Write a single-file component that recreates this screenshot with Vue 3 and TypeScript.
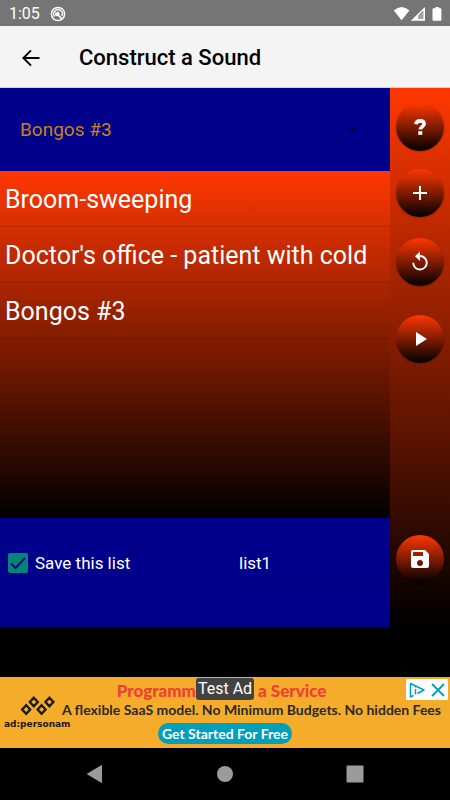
<script setup lang="ts">
import { ref } from 'vue'

const sounds = ref<string[]>(['Broom-sweeping', "Doctor's office - patient with cold", 'Bongos #3'])
const selected = ref('Bongos #3')
const saveList = ref(true)
const listName = ref('list1')
</script>

<template>
  <div class="screen">
    <div class="status">
      <span class="time">1:05</span>
      <svg class="status-app" width="16" height="16" viewBox="0 0 16 16" fill="none" stroke="#fff">
        <circle cx="8" cy="8" r="6.6" stroke-width="1.5" />
        <path d="M4.6 10.6A4.3 4.3 0 1 1 11.8 10" stroke-width="1.3" />
        <path d="M5.4 6.6l6.4 6M5 8.6l2.6 1.2M7.4 5.8l2 2.8" stroke-width="1.6" />
      </svg>
      <svg class="status-icons" width="50" height="16" viewBox="0 0 50 16" fill="#fff">
        <path d="M1.800 4.600Q9.600-2.400 17.400 4.600L9.600 14.200z" />
        <path fill-rule="evenodd" d="M33 1v13.800H18.800zM26.500 9.400v3.600h4.700V4.600z" />
        <path d="M26.500 9.400v3.600h4.700V4.600z" fill="#a3a3a3" />
        <path d="M41.500 2.200h2V1h3.400v1.200h1.500q1 0 1 1v10.600q0 1-1 1h-6.900q-1 0-1-1V3.200q0-1 1-1z" />
      </svg>
    </div>

    <header class="header">
      <button class="back" type="button" aria-label="Back">
        <svg width="20" height="18" viewBox="0 0 20 18" fill="none" stroke="#000" stroke-width="1.9">
          <path d="M18.500 9H2.600M10 1.400L2.400 9l7.600 7.600" />
        </svg>
      </button>
      <h1>Construct a Sound</h1>
    </header>

    <main class="main">
      <div class="content">
        <div class="picker">
          <select v-model="selected" aria-label="Sound">
            <option v-for="sound in sounds" :key="sound">{{ sound }}</option>
          </select>
          <svg class="caret" width="10" height="5" viewBox="0 0 10 5"><path d="M0 0h10L5 5z" fill="#000041" /></svg>
        </div>
        <ul class="list">
          <li v-for="sound in sounds" :key="sound">{{ sound }}</li>
        </ul>
        <div class="save">
          <label class="check">
            <input v-model="saveList" type="checkbox" />
            <span>Save this list</span>
          </label>
          <input v-model="listName" class="name" type="text" aria-label="List name" />
        </div>
      </div>

      <aside class="side">
        <button class="round help" type="button" aria-label="Help">
          <svg width="24" height="24" viewBox="0 0 24 24" fill="none" stroke="#fff" stroke-width="3.6">
            <path d="M7.900 9.200C8.200 6.600 10 5.900 12.200 5.900c2.400 0 3.900 1 3.900 3.100 0 2.900-3.800 2.400-3.800 5.400" />
            <path d="M10.300 18h4" />
          </svg>
        </button>
        <button class="round add" type="button" aria-label="Add">
          <svg width="24" height="24" viewBox="0 0 24 24" fill="none" stroke="#fff" stroke-width="2">
            <path d="M5 12h14M12 5v14" />
          </svg>
        </button>
        <button class="round reset" type="button" aria-label="Reset">
          <svg width="24" height="24" viewBox="0 0 24 24" fill="#fff">
            <path d="M12 5V1.500L7 6.300l5 4.800V7a5.800 5.800 0 1 1-5.800 5.800H4.300A7.700 7.700 0 1 0 12 5z" />
          </svg>
        </button>
        <button class="round play" type="button" aria-label="Play">
          <svg width="24" height="24" viewBox="0 0 24 24" fill="#fff"><path d="M8 5v14l11-7z" /></svg>
        </button>
        <button class="round store" type="button" aria-label="Save">
          <svg width="24" height="24" viewBox="0 0 24 24" fill="#fff" fill-rule="evenodd">
            <path d="M17 3H5c-1.100 0-2 .9-2 2v14c0 1.100.9 2 2 2h14c1.100 0 2-.9 2-2V7zM12 19c-1.700 0-3-1.300-3-3s1.300-3 3-3 3 1.300 3 3-1.300 3-3 3zM15 9H5V5h10z" />
          </svg>
        </button>
      </aside>
    </main>

    <section class="ad">
      <div class="brand">
        <svg width="34" height="20" viewBox="0 0 34 20" fill="none" stroke="#1a1a14" stroke-width="2.300">
          <path d="M5.200 9.200l4 4.300-4 4.300-4-4.300zM12.800 1.700l4 4.300-4 4.300-4-4.300zM20.600 9.200l4 4.300-4 4.300-4-4.300zM28.400 1.700l4 4.300-4 4.300-4-4.300z" />
        </svg>
        <span>ad:personam</span>
      </div>
      <div class="copy">
        <div class="top">
          <span class="headline lead">Programm</span>
          <span class="test">Test Ad</span>
          <span class="headline">a Service</span>
        </div>
        <p class="pitch">A flexible SaaS model. No Minimum Budgets. No hidden Fees</p>
        <a class="cta" href="#">Get Started For Free</a>
      </div>
      <div class="choices">
        <button type="button" aria-label="Ad choices">
          <svg width="16" height="16" viewBox="0 0 16 16" fill="none" stroke="#00a0c4" stroke-width="1.500">
            <path d="M4.500 13.500L1.500 15V1.500L15 8l-6.500 3.500" stroke-linejoin="round" />
            <path d="M6.500 7v5.500M6.500 4v1.500" />
          </svg>
        </button>
        <button type="button" aria-label="Close ad">
          <svg width="14" height="14" viewBox="0 0 14 14" fill="none" stroke="#00a0c4" stroke-width="1.800">
            <path d="M1 1l12 12M13 1L1 13" />
          </svg>
        </button>
      </div>
    </section>

    <nav class="nav">
      <button type="button" aria-label="Back">
        <svg width="18" height="18" viewBox="0 0 18 18" fill="#9b9b9b"><path d="M16 0.500v17q0 .8-.8.300L1 9.300q-.5-.3 0-.6L15.200.2q.8-.4.8.300z" /></svg>
      </button>
      <button type="button" aria-label="Home">
        <svg width="18" height="18" viewBox="0 0 18 18" fill="#9b9b9b"><circle cx="9" cy="9" r="8" /></svg>
      </button>
      <button type="button" aria-label="Recent apps">
        <svg width="18" height="18" viewBox="0 0 18 18" fill="#9b9b9b"><rect x="0.500" y="0.500" width="17" height="17" rx="1" /></svg>
      </button>
    </nav>
  </div>
</template>

<style>
body {
  background: #000;
}
</style>

<style scoped>
* {
  box-sizing: border-box;
}
.screen {
  display: flex;
  flex-direction: column;
  min-height: 100vh;
  background: #000;
  color: #fff;
  font-family: Roboto, "Liberation Sans", sans-serif;
}
button {
  padding: 0;
  border: 0;
  background: none;
  cursor: pointer;
}
svg {
  display: block;
}
.status {
  display: flex;
  align-items: center;
  height: 26px;
  padding: 1px 8px 0 9px;
  background: #757575;
  font-size: 16px;
}
.status-app {
  margin-left: 10px;
}
.status-icons {
  margin-left: auto;
}
.header {
  display: flex;
  align-items: center;
  gap: 38px;
  height: 62px;
  padding: 2px 0 0 21px;
  border-bottom: 1px solid #d0d0d0;
  background: #f4f4f4;
  color: #000;
}
h1 {
  margin: 0;
  font-size: 22px;
  font-weight: 500;
}
.main {
  display: grid;
  grid-template-columns: 1fr 60px;
  flex: 1;
  margin-bottom: 50px;
}
.content {
  display: flex;
  flex-direction: column;
  background: #00008b;
}
.picker {
  display: flex;
  align-items: center;
  height: 83px;
  padding: 0 32px 0 20px;
}
select {
  flex: 1;
  padding: 0;
  border: 0;
  appearance: none;
  background: none;
  color: #c8821b;
  font-family: inherit;
  font-size: 19px;
}
option {
  background: #00008b;
}
.list {
  flex: 1;
  margin: 0;
  padding: 0;
  list-style: none;
  background: linear-gradient(#ff3700, #000);
}
.list li {
  display: flex;
  align-items: center;
  height: 56px;
  padding: 2px 5px 0;
  border-bottom: 1px solid rgba(0, 0, 0, 0.15);
  font-size: 25px;
}
.save {
  display: grid;
  grid-template-columns: 231px 1fr;
  align-items: start;
  height: 109px;
  padding: 19px 5px 0 8px;
}
.check {
  display: flex;
  align-items: center;
  gap: 7px;
  height: 52px;
  font-size: 17px;
}
.check input {
  width: 20px;
  height: 20px;
  margin: 0;
  border: 2px solid #008577;
  border-radius: 2px;
  appearance: none;
}
.check input:checked {
  background: #008577 url("data:image/svg+xml,%3Csvg xmlns='http://www.w3.org/2000/svg' viewBox='0 0 16 16'%3E%3Cpath d='M1 8.500l4.500 4.500L15 3' fill='none' stroke='%2300008b' stroke-width='2'/%3E%3C/svg%3E") center / 16px 16px no-repeat;
}
.name {
  width: 100%;
  height: 53px;
  padding: 0;
  border: 0;
  border-bottom: 1px solid #000038;
  background: none;
  color: #fff;
  font-family: inherit;
  font-size: 17px;
}
.side {
  display: flex;
  flex-direction: column;
  align-items: center;
  padding: 15px 0 44px;
  background: linear-gradient(#ff3700, #000);
}
.round {
  display: grid;
  place-items: center;
  width: 48px;
  height: 48px;
  border-radius: 50%;
  background: linear-gradient(#ff3700, #000);
  box-shadow: 0 1px 2px rgba(0, 0, 0, 0.2);
}
.add {
  margin-top: 18px;
}
.reset {
  margin-top: 21px;
}
.play {
  margin-top: 29px;
}
.store {
  margin-top: auto;
}
.ad {
  position: relative;
  height: 71px;
  background: #f6ac2b;
}
.brand {
  position: absolute;
  left: 4px;
  top: 19px;
  color: #1a1a14;
  font-family: "DejaVu Sans", sans-serif;
  font-size: 9px;
  font-weight: 700;
}
.brand svg {
  margin: 0 0 3px 17px;
}
.copy {
  display: flex;
  flex-direction: column;
  align-items: center;
  font-family: Lato, sans-serif;
  font-weight: 700;
  white-space: nowrap;
}
.top {
  display: grid;
  grid-template-columns: 1fr auto 1fr;
  column-gap: 4px;
  align-self: stretch;
  height: 24px;
}
.headline {
  padding-top: 4px;
  color: #ee4034;
  font-size: 17px;
  font-weight: 900;
  line-height: 20px;
}
.lead {
  margin-right: -4px;
  overflow: hidden;
  text-align: right;
}
.test {
  align-self: start;
  margin-top: 1px;
  padding: 0 2px;
  border-radius: 3px;
  background: #424242;
  font-family: Roboto, sans-serif;
  font-size: 16px;
  font-weight: 400;
  line-height: 22px;
}
.pitch {
  align-self: flex-end;
  margin: 0;
  padding-right: 9px;
  color: #2a2a22;
  font-size: 14px;
  line-height: 18px;
}
.cta {
  margin-top: 4px;
  padding: 0 4px;
  border-radius: 11px;
  background: #009fbc;
  color: #fff;
  font-size: 14px;
  line-height: 21px;
  text-decoration: none;
}
.choices {
  position: absolute;
  top: 2px;
  right: 2px;
  display: grid;
  grid-template-columns: 1fr 1fr;
  width: 42px;
  height: 21px;
  background: #fff;
}
.choices button {
  display: grid;
  place-items: center;
}
.nav {
  display: flex;
  align-items: center;
  justify-content: space-between;
  height: 52px;
  padding: 0 86px;
}
</style>
